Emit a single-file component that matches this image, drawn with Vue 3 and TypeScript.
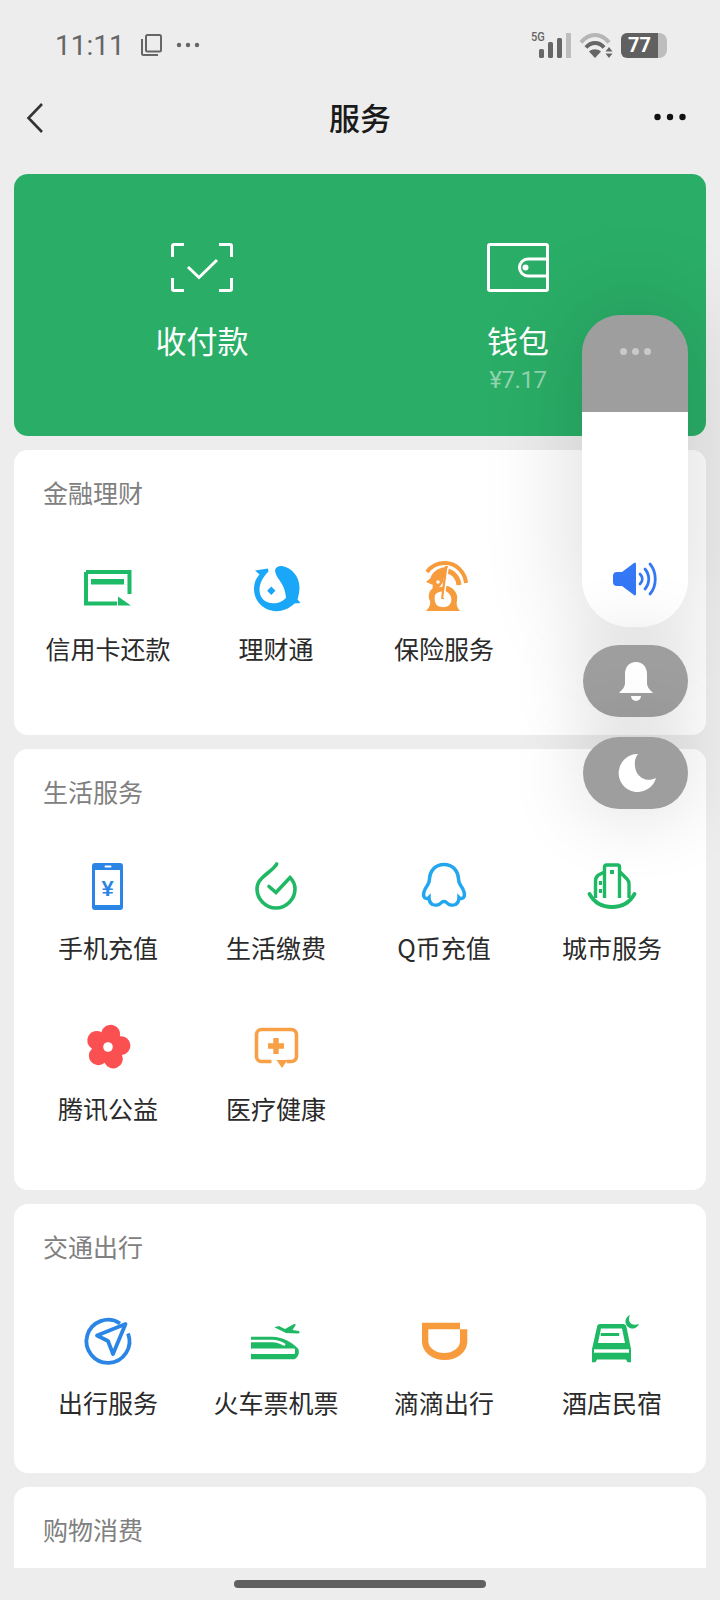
<script setup lang="ts">
// 微信「服务」页，右侧叠加系统音量面板
interface ServiceItem {
  label: string
  icon: string
}
interface Section {
  title: string
  kind: string
  items: ServiceItem[]
}

const sections: Section[] = [
  {
    title: '金融理财',
    kind: 'finance',
    items: [
      { label: '信用卡还款', icon: 'card' },
      { label: '理财通', icon: 'fish' },
      { label: '保险服务', icon: 'insure' },
    ],
  },
  {
    title: '生活服务',
    kind: 'life',
    items: [
      { label: '手机充值', icon: 'phone' },
      { label: '生活缴费', icon: 'drop' },
      { label: 'Q币充值', icon: 'qq' },
      { label: '城市服务', icon: 'city' },
      { label: '腾讯公益', icon: 'flower' },
      { label: '医疗健康', icon: 'medical' },
    ],
  },
  {
    title: '交通出行',
    kind: 'travel',
    items: [
      { label: '出行服务', icon: 'nav' },
      { label: '火车票机票', icon: 'train' },
      { label: '滴滴出行', icon: 'didi' },
      { label: '酒店民宿', icon: 'hotel' },
    ],
  },
  { title: '购物消费', kind: 'shop', items: [] },
]

const petals = [12, 84, 156, 228, 300]
</script>

<template>
  <div class="phone">
    <div class="status">
      <span class="time">11:11</span>
      <svg class="copy" viewBox="0 0 22 22" width="22" height="22">
        <rect x="6" y="1" width="15" height="16.500" rx="1.500" fill="none" stroke="#666" stroke-width="2" />
        <path d="M2 5v14.500q0 1.500 1.500 1.500H18" fill="none" stroke="#666" stroke-width="2" />
      </svg>
      <svg class="more" viewBox="0 0 24 6" width="24" height="6">
        <circle cx="3" cy="3" r="2.200" fill="#666" />
        <circle cx="12" cy="3" r="2.200" fill="#666" />
        <circle cx="21" cy="3" r="2.200" fill="#666" />
      </svg>
      <div class="status-right">
        <div class="signal">
          <span class="five-g">5G</span>
          <svg viewBox="0 0 32 25" width="32" height="25">
            <rect x="0" y="16" width="5" height="9" rx="1.500" fill="#666" />
            <rect x="9" y="9" width="5" height="16" rx="1.500" fill="#666" />
            <rect x="18" y="5" width="5" height="20" rx="1.500" fill="#666" />
            <rect x="27" y="0" width="5" height="25" fill="#bdbdbd" />
          </svg>
        </div>
        <svg viewBox="0 0 34 25" width="34" height="25">
          <path d="M2 9.500C10-.5 22-.5 30 9.500" fill="none" stroke="#b5b5b5" stroke-width="4" />
          <path d="M7 14.500C12 8.500 20 8.500 25 14.500" fill="none" stroke="#666" stroke-width="4" />
          <path d="M16 25l-6-6.500c3.500-3 8.500-3 12 0z" fill="#666" />
          <path d="M30 14l3.500 4.500h-7zM30 25l-3.500-4.500h7z" fill="#666" />
        </svg>
        <div class="battery">
          <span class="level">77</span>
          <span class="rest"></span>
        </div>
      </div>
    </div>

    <div class="nav">
      <svg class="back" viewBox="0 0 18 32" width="18" height="32">
        <path d="M16 2L2.500 16 16 30" fill="none" stroke="#333" stroke-width="2.600" />
      </svg>
      <span class="nav-title">服务</span>
      <svg class="nav-more" viewBox="0 0 32 8" width="32" height="8">
        <circle cx="3.500" cy="4" r="3.200" fill="#111" />
        <circle cx="16" cy="4" r="3.200" fill="#111" />
        <circle cx="28.500" cy="4" r="3.200" fill="#111" />
      </svg>
    </div>

    <div class="scroll">
      <div class="hero">
        <div class="hero-item">
          <svg viewBox="0 0 62 49" width="62" height="49" fill="none" stroke="#fff" stroke-width="3">
            <path d="M1.500 14V3q0-1.500 1.500-1.500h10M48 1.500h11q1.500 0 1.500 1.500v11M1.500 35v11q0 1.500 1.500 1.500h10M48 47.500h11q1.500 0 1.500-1.500V35" />
            <path d="M17 24l11 10.500L46 17" />
          </svg>
          <span class="hero-label">收付款</span>
        </div>
        <div class="hero-item">
          <svg viewBox="0 0 62 49" width="62" height="49" fill="none" stroke="#fff" stroke-width="3">
            <rect x="1.500" y="1.500" width="59" height="46" rx="1.500" />
            <path d="M60 16H41a8.500 8.500 0 0 0 0 17h19" />
            <circle cx="38.500" cy="24.500" r="3" fill="#fff" stroke="none" />
          </svg>
          <span class="hero-label">钱包</span>
          <span class="hero-sub">¥7.17</span>
        </div>
      </div>

      <section v-for="sec in sections" :key="sec.title" class="card" :class="sec.kind">
        <h3 class="card-title">{{ sec.title }}</h3>
        <div v-if="sec.items.length" class="grid">
          <div v-for="item in sec.items" :key="item.label" class="item">
            <svg class="icon" viewBox="0 0 48 48" width="48" height="48">
              <template v-if="item.icon === 'card'">
                <path d="M2 10h43.500v22M33 41.500H2V10" fill="none" stroke="#1dbb67" stroke-width="4" />
                <rect x="7" y="17" width="33" height="5.500" fill="#1dbb67" />
                <path d="M34 34.500l13 9H34z" fill="#1dbb67" />
              </template>
              <template v-else-if="item.icon === 'fish'">
                <path d="M23 8c1-3 4-4.500 7-4 10 2 17 10 17.500 21 0 5-1 9-2 12.500l3 3.500-6 .5c-5 5-12 7.700-18 7.700C11 48.700 2 38.500 2 27c0-6 2-11 5.500-14.500L3 8.500l13-2 .5 3C11 15 7.500 21 7.500 28c0 8 6 13.300 13.500 13.300 6 0 10-2 13-5.500-.5-7-3-13-6.500-17.500C25 15 23 11 23 8z" fill="#1aa7f8" />
                <path d="M19.300 24.500l4.200 4.200-4.200 4.200-4.200-4.200z" fill="#1aa7f8" />
              </template>
              <template v-else-if="item.icon === 'insure'">
                <path d="M7 10C12 3 19 1 25 1c11 0 20 9 21 20" fill="none" stroke="#f79c3c" stroke-width="4" />
                <path d="M27 9c6 1 11 6 12 14" fill="none" stroke="#f79c3c" stroke-width="5" />
                <path d="M26 5C17 6 12 11 10.500 16L6 20l7 3c-1 2-.5 4 1 4 4 0 7-3 9-7z" fill="#f79c3c" />
                <path d="M13 26c-4 3-5.500 8-3 13 1 3-1 7-4 10h34c-3-3-4-7-3-11 1-6-2-11-9-14z" fill="#f79c3c" />
                <path d="M15 33c-1 5 0 9 3 11 3 1.500 8 1.500 10 0 3-2 4-6 3-9-1-3-3-5-6-6-4 0-8 1-10 4z" fill="#fff" />
                <path d="M26.500 4L22.500 37" fill="none" stroke="#f79c3c" stroke-width="3" />
                <path d="M28 6L24 36" fill="none" stroke="#fff" stroke-width="1.500" />
                <circle cx="18" cy="20" r="1.800" fill="#fff" />
              </template>
              <template v-else-if="item.icon === 'phone'">
                <rect x="8" y="2" width="31" height="47" rx="3" fill="#2b85e4" />
                <rect x="11" y="9" width="25" height="35" fill="#fff" />
                <rect x="20.500" y="4.500" width="7" height="2" rx="1" fill="#fff" />
                <text x="23.500" y="34.500" class="yen">¥</text>
              </template>
              <template v-else-if="item.icon === 'drop'">
                <path d="M24.700 3C22 8 15 12 10 17 7 20 5 24 5 28c0 10 8.500 19 19 19s19-9 19-19c0-4-1.500-8-5-11.500L24 31.500l-7-6" fill="none" stroke="#1fb864" stroke-width="3.600" stroke-linecap="round" />
              </template>
              <template v-else-if="item.icon === 'qq'">
                <path d="M24 3.500C15 3.500 10 10 9.500 18c0 3-.5 4-2.500 7-3 4-4.500 9-2.500 11.500C6 38 8 37.500 9 36.500c0 3 1 5.500 3.500 7 2.500 1 6.500 1 9-2 1-1.500 4-1.500 5 0 2.500 3 6.500 3 9 2 2.500-1.500 3.500-4 3.500-7 1 1 3 1.500 4.500 0 2-2.500.5-7.500-2.500-11.500-2-3-2.500-4-2.500-7C38 10 33 3.500 24 3.500z" fill="none" stroke="#22a7ee" stroke-width="3.500" />
              </template>
              <template v-else-if="item.icon === 'city'">
                <g fill="none" stroke="#1fb864" stroke-width="3.400">
                  <path d="M16.500 37V6q0-2 2-2h11q2 0 2 2v31" />
                  <path d="M7.500 37V20q0-4 3-6l6-3M32 11l7 7q2 2 2 5v14" />
                  <path d="M1.500 33c5 9 13 13 22.500 13s17.500-4 22.500-13" stroke-width="3.800" stroke-linecap="round" />
                </g>
                <rect x="22" y="9" width="4" height="4" fill="#1fb864" />
                <rect x="11" y="20" width="3" height="4" fill="#1fb864" />
                <rect x="11" y="28" width="3" height="4" fill="#1fb864" />
              </template>
              <template v-else-if="item.icon === 'flower'">
                <circle v-for="a in petals" :key="a" cx="24" cy="12" r="9.500" fill="#fb5052" :transform="`rotate(${a} 24 25)`" />
                <circle cx="24" cy="25" r="10" fill="#fb5052" />
                <circle cx="24" cy="25" r="4.800" fill="#fff" />
              </template>
              <template v-else-if="item.icon === 'medical'">
                <path d="M19.500 39.500H9.500a5 5 0 0 1-5-5V12.500a5 5 0 0 1 5-5h30a5 5 0 0 1 5 5v22a5 5 0 0 1-5 5h-5" fill="none" stroke="#f7a046" stroke-width="3.600" />
                <path d="M24.500 38h11l-5.500 8z" fill="#f7a046" />
                <path d="M24 16v16M16 24h16" stroke="#f7a046" stroke-width="5.400" />
              </template>
              <template v-else-if="item.icon === 'nav'">
                <path d="M36 7.500A21.500 21.500 0 1 0 44 17.500" fill="none" stroke="#2b85e4" stroke-width="3.800" />
                <path d="M41.500 8L13 19.500l11 5.500 5 13z" fill="none" stroke="#2b85e4" stroke-width="3.800" stroke-linejoin="round" />
              </template>
              <template v-else-if="item.icon === 'train'">
                <path d="M22.300 11.300L27 10l6 3 9-5 2 .5L40.500 14l6.500 1q1.500 2-1 2.500L34 17z" fill="#1fb864" />
                <path d="M-1 20.700h21c10 0 20 5.300 26 11.800 1.500 2.500 1.500 8.500-4 10.800H-1z" fill="#1fb864" />
                <path d="M-1 25h21c4 0 9 1.500 13 4" fill="none" stroke="#fff" stroke-width="2.500" />
                <rect x="-1" y="32.500" width="44" height="5.500" rx="1" fill="#fff" />
              </template>
              <template v-else-if="item.icon === 'didi'">
                <path fill-rule="evenodd" d="M2 6.700h38v6.600h7.300v12.400a22.600 18.300 0 0 1-45.300 0zM8.300 13.300V25a15.800 12 0 0 0 31.700 0V13.300z" fill="#f79b3d" />
              </template>
              <template v-else-if="item.icon === 'hotel'">
                <path d="M12 8h23q3 0 3.500 3L43 33v13.300H39.500L38 43.500H9L7.500 46.300H4V33L9 11q.3-3 3-3z" fill="#1fb864" />
                <path d="M13 12.500h21l3 14.500H10z" fill="#fff" />
                <rect x="12.700" y="17" width="18.500" height="3" fill="#1fb864" />
                <rect x="6" y="33.300" width="35" height="3.400" fill="#fff" />
                <path d="M42-1A7 7 0 1 0 51 8C43 11 39 5 42-1z" fill="#1fb864" />
              </template>
            </svg>
            <span class="label">{{ item.label }}</span>
          </div>
        </div>
      </section>
    </div>

    <div class="home-bar"><span class="home-pill"></span></div>

    <div class="volume">
      <div class="slider">
        <div class="slider-top">
          <i></i><i></i><i></i>
        </div>
        <div class="slider-fill">
          <svg viewBox="0 0 44 34" width="44" height="34">
            <path d="M0 14q0-4 4-4h5L21 1q2-1.500 2 1.500v29q0 3-2 1.500L9 24H4q-4 0-4-4z" fill="#3478f6" />
            <path d="M27 12c3 3 3 7 0 10M32 7c5 6 5 14 0 20" fill="none" stroke="#3478f6" stroke-width="2.800" stroke-linecap="round" />
            <path d="M37 2c7 8 7 22 0 30" fill="none" stroke="#3478f6" stroke-width="2.800" stroke-linecap="round" />
          </svg>
        </div>
      </div>
      <div class="pill">
        <svg viewBox="0 0 34 39" width="34" height="39">
          <path d="M17 0c7 0 11 5.500 11 12v9c0 4 3 7 6 10H0c3-3 6-6 6-10v-9C6 5.500 10 0 17 0z" fill="#fff" />
          <path d="M12 34h10a5 5 0 0 1-10 0z" fill="#fff" />
        </svg>
      </div>
      <div class="pill">
        <svg class="moon" viewBox="0 0 38 38" width="38" height="38">
          <path d="M20 0A19 19 0 1 0 38 24C30 28 22 25 18.500 18 16 12 16 5 20 0z" fill="#fff" />
        </svg>
      </div>
    </div>
  </div>
</template>

<style>
html,
body {
  margin: 0;
  background: #ededed;
}
</style>

<style scoped>
.phone {
  position: relative;
  width: 720px;
  height: 1600px;
  display: flex;
  flex-direction: column;
  overflow: hidden;
  background: #ededed;
  font-family: "Noto Sans CJK SC", Roboto, sans-serif;
  color: #222;
}

.status {
  height: 90px;
  flex: none;
  display: flex;
  align-items: center;
  padding: 0 53px 0 55px;
  box-sizing: border-box;
  color: #666;
}

.time {
  font-family: Roboto, sans-serif;
  font-size: 28px;
}

.copy {
  margin-left: 15px;
}

.more {
  margin-left: 14px;
}

.status-right {
  margin-left: auto;
  display: flex;
  align-items: center;
  gap: 8px;
}

.signal {
  position: relative;
  padding-left: 8px;
  display: flex;
}

.five-g {
  position: absolute;
  left: 0;
  top: -3px;
  font-family: Roboto, sans-serif;
  font-size: 13px;
  line-height: 14px;
  font-weight: 500;
  transform: scaleX(0.85);
  transform-origin: left;
}

.battery {
  width: 46px;
  height: 25px;
  display: flex;
  border-radius: 6px 8px 8px 6px;
  overflow: hidden;
}

.level {
  width: 37px;
  background: #606060;
  color: #fff;
  font-family: Roboto, sans-serif;
  font-weight: 700;
  font-size: 20px;
  line-height: 25px;
  text-align: center;
}

.rest {
  flex: 1;
  background: #bdbdbd;
}

.nav {
  height: 84px;
  flex: none;
  position: relative;
  display: flex;
  align-items: center;
  justify-content: center;
  padding-bottom: 31px;
  box-sizing: border-box;
}

.back {
  position: absolute;
  left: 26px;
  top: 12px;
}

.nav-more {
  position: absolute;
  right: 34px;
  top: 23px;
}

.nav-title {
  font-size: 31px;
  line-height: 40px;
  font-weight: 500;
  color: #1a1a1a;
}

.scroll {
  flex: 1;
  min-height: 0;
  overflow: hidden;
  padding: 0 14px;
  display: flex;
  flex-direction: column;
  gap: 14px;
}

.hero {
  flex: none;
  height: 262px;
  background: #2aae67;
  border-radius: 14px;
  display: grid;
  grid-template-columns: 1fr 1fr;
  padding: 69px 30px 0;
  box-sizing: border-box;
}

.hero-item {
  display: flex;
  flex-direction: column;
  align-items: center;
}

.hero-label {
  margin-top: 24px;
  font-size: 31px;
  line-height: 48px;
  color: #fff;
}

.hero-sub {
  margin-top: 2px;
  font-family: Roboto, sans-serif;
  font-size: 24px;
  line-height: 28px;
  letter-spacing: -0.4px;
  color: #93d5b0;
}

.card {
  flex: none;
  background: #fff;
  border-radius: 14px;
}

.card-title {
  margin: 0;
  padding-left: 29px;
  font-size: 25px;
  line-height: 84px;
  height: 88px;
  font-weight: 400;
  color: #808080;
}

.grid {
  display: grid;
  grid-template-columns: repeat(4, 1fr);
  padding: 0 10px;
}

.finance {
  padding-bottom: 36px;
}

.life {
  padding-bottom: 31px;
}

.travel {
  padding-bottom: 20px;
}

.shop {
  height: 120px;
}

.item {
  height: 161px;
  padding-top: 24px;
  box-sizing: border-box;
  display: flex;
  flex-direction: column;
  align-items: center;
}

.icon {
  flex: none;
  overflow: visible;
}

.label {
  margin-top: 20px;
  font-size: 25px;
  line-height: 36px;
  white-space: nowrap;
  color: #2a2a2a;
}

.yen {
  font-family: "Liberation Sans", sans-serif;
  font-size: 22px;
  font-weight: 700;
  fill: #2b85e4;
  text-anchor: middle;
}

.home-bar {
  height: 32px;
  flex: none;
  display: flex;
  justify-content: center;
  padding-top: 12px;
  box-sizing: border-box;
}

.home-pill {
  width: 252px;
  height: 8px;
  border-radius: 4px;
  background: #606060;
}

.volume {
  position: absolute;
  left: 582px;
  top: 315px;
  width: 106px;
  display: flex;
  flex-direction: column;
  gap: 18px;
}

.slider {
  height: 312px;
  border-radius: 38px 38px 48px 48px;
  overflow: hidden;
  display: flex;
  flex-direction: column;
  box-shadow: 0 0 90px 14px rgba(0, 0, 0, 0.12);
}

.slider-top {
  height: 97px;
  background: #9e9e9f;
  display: flex;
  justify-content: center;
  gap: 5px;
  padding-top: 33px;
  box-sizing: border-box;
}

.slider-top i {
  width: 7px;
  height: 7px;
  border-radius: 50%;
  background: #c9c9cb;
}

.slider-fill {
  flex: 1;
  background: #fff;
  display: flex;
  justify-content: center;
  align-items: flex-end;
  padding-bottom: 31px;
}

.pill {
  height: 72px;
  margin-left: 1px;
  border-radius: 36px;
  background: #9e9e9f;
  display: flex;
  align-items: center;
  justify-content: center;
  box-shadow: 0 0 70px 12px rgba(0, 0, 0, 0.1);
}

.pill + .pill {
  margin-top: 2px;
}

.moon {
  margin-left: 3px;
}
</style>
